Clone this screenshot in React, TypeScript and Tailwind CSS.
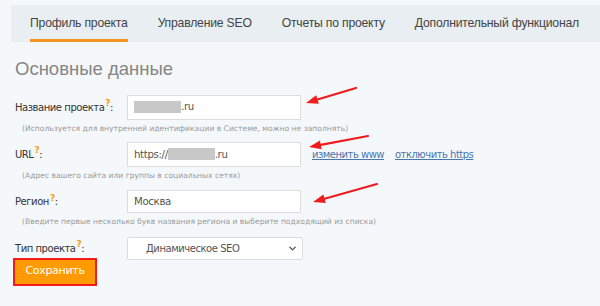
import React from 'react';
import { ChevronDown } from 'lucide-react';

const tabs = ['Профиль проекта', 'Управление SEO', 'Отчеты по проекту', 'Дополнительный функционал'];

function Q() {
  return <sup className="text-[#f39c12] font-bold text-[9px] ml-[1px]">?</sup>;
}

function Arrow({ x1, y1, x2, y2 }: { x1: number; y1: number; x2: number; y2: number }) {
  const a = Math.atan2(y2 - y1, x2 - x1);
  const L = 12;
  const w = 4.5;
  const bx = x2 - L * Math.cos(a);
  const by = y2 - L * Math.sin(a);
  const px = -Math.sin(a) * w;
  const py = Math.cos(a) * w;
  return (
    <g>
      <line x1={x1} y1={y1} x2={bx} y2={by} stroke="#ee1c1c" strokeWidth={2.2} strokeLinecap="round" />
      <polygon points={`${x2},${y2} ${bx + px},${by + py} ${bx - px},${by - py}`} fill="#ee1c1c" />
    </g>
  );
}

function Blur({ w }: { w: number }) {
  return <span className="inline-block h-[12px] bg-[#c8c8c8]" style={{ width: w }} />;
}

export default function App() {
  const label = "w-[112px] shrink-0 text-[10px] text-[#333] font-['DejaVu_Sans',sans-serif] tracking-[-0.45px]";
  const input = "w-[174px] h-[25px] bg-white border border-[#dcdcdc] flex items-center px-[6px] text-[10.2px] text-[#555] font-['DejaVu_Sans',sans-serif] tracking-[-0.35px]";
  const hint = "pl-[7px] text-[7.6px] text-[#999] font-['DejaVu_Sans',sans-serif] mt-[3px] whitespace-nowrap";
  const link = "text-[10px] text-[#4a76b0] underline font-['DejaVu_Sans',sans-serif] tracking-[-0.5px]";

  return (
    <div className="relative w-[600px] h-[306px] bg-[#f5f8fa] overflow-hidden font-['Liberation_Sans',sans-serif]">
      <div className="ml-[11px] mt-[5px] h-[37px] bg-[#e8eef1] flex items-stretch pl-[19px] gap-[30px]">
        {tabs.map((t, i) => (
          <div
            key={t}
            className={`flex items-center shrink-0 whitespace-nowrap text-[12.2px] tracking-[-0.2px] text-[#444] border-b-[3px] ${i === 0 ? 'border-[#f7941d]' : 'border-transparent'} pt-[3px]`}
          >
            {t}
          </div>
        ))}
      </div>

      <div className="pl-[15px] mt-[18px] text-[18.5px] text-[#858585] leading-none">Основные данные</div>

      <div className="pl-[15px] mt-[16px]">
        <div className="flex items-center">
          <div className={label}>Название проекта<Q />:</div>
          <div className={input}><Blur w={47} /><span>.ru</span></div>
        </div>
        <div className={hint}>(Используется для внутренней идентификации в Системе, можно не заполнять)</div>

        <div className="flex items-center mt-[8px]">
          <div className={label}>URL<Q />:</div>
          <div className={input}><span>https://</span><Blur w={47} /><span>.ru</span></div>
          <a className={`ml-[11px] ${link}`}>изменить www</a>
          <a className={`ml-[11px] ${link}`}>отключить https</a>
        </div>
        <div className={hint}>(Адрес вашего сайта или группы в социальных сетях)</div>

        <div className="flex items-center mt-[9px]">
          <div className={label}>Регион<Q />:</div>
          <div className={input.replace('h-[25px]', 'h-[23px]')}>Москва</div>
        </div>
        <div className={hint}>(Введите первые несколько букв названия региона и выберите подходящий из списка)</div>

        <div className="flex items-center mt-[9px]">
          <div className={label}>Тип проекта<Q />:</div>
          <div className="w-[176px] h-[23px] bg-white border border-[#dcdcdc] rounded-[2px] flex items-center pl-[18px] pr-[4px] text-[10px] tracking-[-0.45px] text-[#555] font-['DejaVu_Sans',sans-serif]">
            <span className="flex-1">Динамическое SEO</span>
            <ChevronDown className="w-[11px] h-[11px] text-[#555]" strokeWidth={3} />
          </div>
        </div>

        <button className="block -ml-[2px] -mt-[2px] w-[84px] h-[28px] bg-[#ff9a00] border-2 border-[#ee1c1c] text-white text-[11px] font-['DejaVu_Sans',sans-serif] tracking-[-0.3px]">
          Сохранить
        </button>
      </div>

      <svg className="absolute inset-0 pointer-events-none" width={600} height={306}>
        <Arrow x1={356} y1={88} x2={306} y2={103} />
        <Arrow x1={368} y1={136} x2={309} y2={147} />
        <Arrow x1={377} y1={184} x2={313} y2={202} />
      </svg>
    </div>
  );
}
